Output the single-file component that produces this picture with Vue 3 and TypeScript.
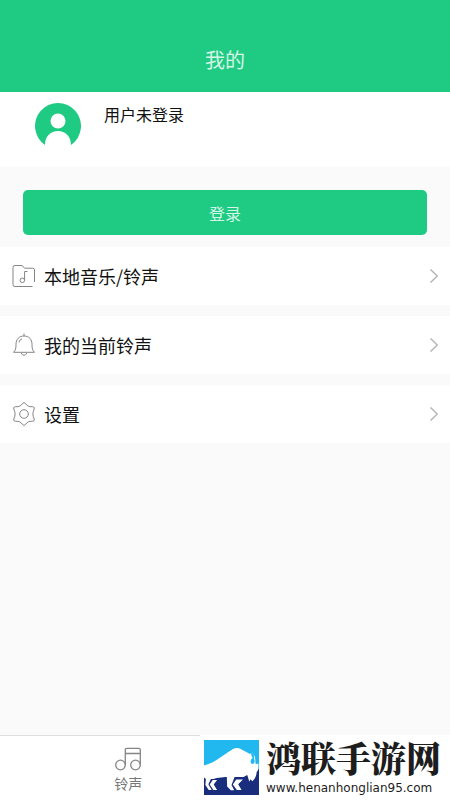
<script setup lang="ts">
interface MenuItem {
  id: string
  label: string
}

const menu: MenuItem[] = [
  { id: 'music', label: '本地音乐/铃声' },
  { id: 'bell', label: '我的当前铃声' },
  { id: 'settings', label: '设置' },
]
</script>

<template>
  <div class="page">
    <header class="header">
      <h1>我的</h1>
    </header>

    <main class="content">
      <section class="profile">
        <svg class="avatar" viewBox="0 0 46 46" aria-hidden="true">
          <path d="M10 42A23 23 0 1 1 36 42C36 33 30 28 23 28S10 33 10 42Z" fill="#1fcb83" />
          <circle cx="23" cy="18" r="7.5" fill="#fff" />
        </svg>
        <p class="user">用户未登录</p>
      </section>

      <div class="login-area">
        <button class="login" type="button">登录</button>
      </div>

      <nav class="menu" aria-label="我的">
        <a v-for="item in menu" :key="item.id" class="row" href="#">
          <svg class="icon" viewBox="0 0 24 24" aria-hidden="true">
            <g v-if="item.id === 'music'">
              <path d="M22.500 18V6Q22.500 4.200 20.500 4.200H12.500L10.200 1.500H3Q1 1.500 1 3.500V20.500Q1 22.500 3 22.500H20.500" />
              <circle cx="10.300" cy="16.300" r="2.300" />
              <path d="M12.600 16.300V7.500H15.500" />
            </g>
            <g v-else-if="item.id === 'bell'">
              <path d="M12 0.500V3M1.500 19.300C3.500 17.500 4 15.500 4 11.500C4 6.300 7 3 12 3S20 6.300 20 11.500C20 15.500 20.500 17.500 22.500 19.300Z" />
              <path d="M7 9.500C7.300 7.500 8.500 6.200 10 5.900M9.500 20C9.700 23 14.300 23 14.500 20" />
            </g>
            <g v-else>
              <path d="M10.700 1.300Q12-.2 13.300 1.300C15 4 17 5 20.500 4.700Q23 4.800 22.200 7C20.500 10.500 20.500 13.500 22.200 17Q23 19.200 20.500 19.300C17 19 15 20 13.300 22.700Q12 24.200 10.700 22.700C9 20 7 19 3.500 19.300Q1 19.200 1.800 17C3.500 13.500 3.500 10.500 1.800 7Q1 4.800 3.500 4.700C7 5 9 4 10.700 1.300Z" />
              <circle cx="12" cy="12" r="4.300" />
            </g>
          </svg>
          <span class="label">{{ item.label }}</span>
          <svg class="chevron" viewBox="0 0 8 14" aria-hidden="true">
            <path d="M0.500 0.500L7.300 7L0.500 13.500" />
          </svg>
        </a>
      </nav>
    </main>

    <footer class="tabbar">
      <a class="tab" href="#">
        <svg class="notes" viewBox="0 0 26 24" aria-hidden="true">
          <circle cx="5.500" cy="18" r="4.800" />
          <circle cx="20.500" cy="18" r="4.800" />
          <path d="M10.300 18V3Q10.300 1.300 12 1.300H23.700Q25.300 1.300 25.300 3V18M10.300 6.500H25.300" />
        </svg>
        <span>铃声</span>
      </a>
      <div class="brand">
        <svg class="logo" viewBox="0 0 164 164" aria-hidden="true">
          <path d="M0 0H164V164H0Z" fill="#182d7c" />
          <path d="M0 0H164V86H0Z" fill="#20b8ee" />
          <path d="M0 76C34 67 57 44 80 31C94 21 104 22 115 30L137 42L144 37L152 50L154 72L162 70V88L157 96C156 108 152 116 144 123L139 117L135 124L129 104L118 110H64L38 113L28 116H0Z" fill="#fff" />
          <path d="M0 112L6 116L3 133L13 149H0Z" fill="#182d7c" />
          <path d="M6 112H23L13 132L23 149H14L4 134Z" fill="#fff" />
          <path d="M26 119H39L29 133L39 149H28L17 133Z" fill="#fff" />
          <path d="M68 108H92L82 134L90 150H80L69 139Z" fill="#fff" />
          <path d="M96 118H116L102 132L112 149H98L86 133Z" fill="#fff" />
          <path d="M142 35C148 40 151 49 149 57C155 65 148 73 142 71C138 68 137 60 145 54C141 46 139 40 142 35Z" fill="#20b8ee" />
        </svg>
        <div class="brand-text">
          <strong>鸿联手游网</strong>
          <span>www.henanhonglian95.com</span>
        </div>
      </div>
    </footer>
  </div>
</template>

<style>
body {
  margin: 0;
}
</style>

<style scoped>
.page {
  min-height: 100vh;
  display: flex;
  flex-direction: column;
  background: #fafafa;
  color: #111;
  font-family: "Noto Sans CJK SC", sans-serif;
}

.header {
  padding: 44px 16px 16px;
  background: #1fcb83;
  text-align: center;
}

h1 {
  margin: 0;
  color: #d5f6e7;
  font-size: 20px;
  font-weight: 400;
  line-height: 32px;
}

.content {
  flex: 1;
}

.profile {
  display: flex;
  align-items: flex-start;
  gap: 23px;
  padding: 11px 35px 18px;
  background: #fff;
}

.avatar {
  width: 46px;
  height: 46px;
}

.user {
  margin: 0;
  font-size: 16px;
  line-height: 22px;
}

.login-area {
  padding: 23px 23px 12px;
}

.login {
  display: block;
  width: 100%;
  height: 45px;
  padding: 0;
  border: 0;
  border-radius: 5px;
  background: #1fcb83;
  color: #d5f6e7;
  font: inherit;
  font-size: 16px;
}

.menu {
  display: flex;
  flex-direction: column;
  gap: 11px;
}

.row {
  display: flex;
  align-items: center;
  gap: 8px;
  height: 58px;
  padding: 0 12px;
  background: #fff;
  color: inherit;
  text-decoration: none;
}

.icon {
  width: 24px;
  height: 24px;
  fill: none;
  stroke: #858585;
  stroke-width: 1;
}

.label {
  flex: 1;
  font-size: 18px;
  line-height: 26px;
}

.chevron {
  width: 8px;
  height: 14px;
  fill: none;
  stroke: #b5b5b5;
  stroke-width: 1.5;
}

.tabbar {
  position: relative;
  border-top: 1px solid #dedede;
  background: #fff;
}

.tab {
  display: flex;
  flex-direction: column;
  align-items: center;
  gap: 2px;
  width: 57%;
  padding: 11px 0 7px;
  color: #777;
  font-size: 14px;
  line-height: 20px;
  text-decoration: none;
}

.notes {
  width: 26px;
  height: 24px;
  fill: none;
  stroke: #858585;
  stroke-width: 1.3;
}

.brand {
  position: absolute;
  top: -1px;
  right: 0;
  bottom: 0;
  display: flex;
  align-items: center;
  gap: 7px;
  box-sizing: border-box;
  width: 250px;
  padding-left: 4px;
  background: #fff;
}

.logo {
  flex: none;
  width: 55px;
  height: 55px;
}

.brand-text {
  display: flex;
  flex-direction: column;
  gap: 2px;
  padding-bottom: 4px;
  color: #1d1d1d;
  white-space: nowrap;
}

.brand-text strong {
  font-family: "Noto Serif CJK SC", "Noto Sans CJK SC", serif;
  font-size: 35px;
  font-weight: 900;
  line-height: 42px;
}

.brand-text span {
  font-family: "DejaVu Sans", sans-serif;
  font-size: 12px;
  line-height: 16px;
}
</style>
